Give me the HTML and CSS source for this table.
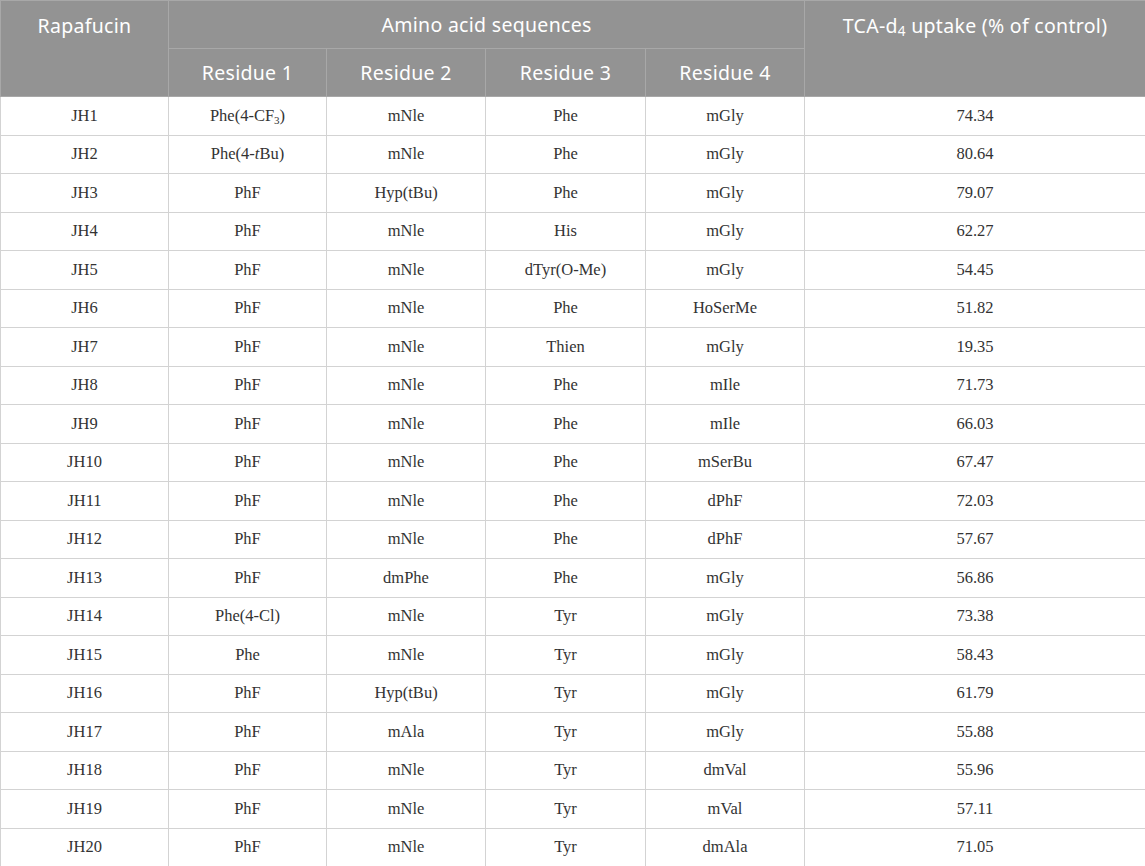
FILE: index.html
```html
<!DOCTYPE html>
<html>
<head>
<meta charset="utf-8">
<link rel="stylesheet" href="styles.css">
</head>
<body>
<table class="data">
  <colgroup>
    <col class="c0"><col class="c1"><col class="c2"><col class="c3"><col class="c4"><col class="c5">
  </colgroup>
  <thead>
    <tr class="h1">
      <th rowspan="2" class="top">Rapafucin</th>
      <th colspan="4">Amino acid sequences</th>
      <th rowspan="2" class="top">TCA-d<sub>4</sub> uptake (% of control)</th>
    </tr>
    <tr class="h2">
      <th>Residue 1</th><th>Residue 2</th><th>Residue 3</th><th>Residue 4</th>
    </tr>
  </thead>
  <tbody>
    <tr><td>JH1</td><td>Phe(4-CF<sub>3</sub>)</td><td>mNle</td><td>Phe</td><td>mGly</td><td>74.34</td></tr>
    <tr><td>JH2</td><td>Phe(4-<i>t</i>Bu)</td><td>mNle</td><td>Phe</td><td>mGly</td><td>80.64</td></tr>
    <tr><td>JH3</td><td>PhF</td><td>Hyp(tBu)</td><td>Phe</td><td>mGly</td><td>79.07</td></tr>
    <tr><td>JH4</td><td>PhF</td><td>mNle</td><td>His</td><td>mGly</td><td>62.27</td></tr>
    <tr><td>JH5</td><td>PhF</td><td>mNle</td><td>dTyr(O-Me)</td><td>mGly</td><td>54.45</td></tr>
    <tr><td>JH6</td><td>PhF</td><td>mNle</td><td>Phe</td><td>HoSerMe</td><td>51.82</td></tr>
    <tr><td>JH7</td><td>PhF</td><td>mNle</td><td>Thien</td><td>mGly</td><td>19.35</td></tr>
    <tr><td>JH8</td><td>PhF</td><td>mNle</td><td>Phe</td><td>mIle</td><td>71.73</td></tr>
    <tr><td>JH9</td><td>PhF</td><td>mNle</td><td>Phe</td><td>mIle</td><td>66.03</td></tr>
    <tr><td>JH10</td><td>PhF</td><td>mNle</td><td>Phe</td><td>mSerBu</td><td>67.47</td></tr>
    <tr><td>JH11</td><td>PhF</td><td>mNle</td><td>Phe</td><td>dPhF</td><td>72.03</td></tr>
    <tr><td>JH12</td><td>PhF</td><td>mNle</td><td>Phe</td><td>dPhF</td><td>57.67</td></tr>
    <tr><td>JH13</td><td>PhF</td><td>dmPhe</td><td>Phe</td><td>mGly</td><td>56.86</td></tr>
    <tr><td>JH14</td><td>Phe(4-Cl)</td><td>mNle</td><td>Tyr</td><td>mGly</td><td>73.38</td></tr>
    <tr><td>JH15</td><td>Phe</td><td>mNle</td><td>Tyr</td><td>mGly</td><td>58.43</td></tr>
    <tr><td>JH16</td><td>PhF</td><td>Hyp(tBu)</td><td>Tyr</td><td>mGly</td><td>61.79</td></tr>
    <tr><td>JH17</td><td>PhF</td><td>mAla</td><td>Tyr</td><td>mGly</td><td>55.88</td></tr>
    <tr><td>JH18</td><td>PhF</td><td>mNle</td><td>Tyr</td><td>dmVal</td><td>55.96</td></tr>
    <tr><td>JH19</td><td>PhF</td><td>mNle</td><td>Tyr</td><td>mVal</td><td>57.11</td></tr>
    <tr><td>JH20</td><td>PhF</td><td>mNle</td><td>Tyr</td><td>dmAla</td><td>71.05</td></tr>
  </tbody>
</table>
</body>
</html>
```
FILE: styles.css
```css
html, body {
  margin: 0;
  padding: 0;
  background: #ffffff;
}
.data {
  width: 1145px;
  border-collapse: collapse;
  table-layout: fixed;
}
.c0 { width: 168px; }
.c1 { width: 158px; }
.c2 { width: 159px; }
.c3 { width: 160px; }
.c4 { width: 159px; }
.c5 { width: 341px; }
.data th {
  background: #939393;
  color: #ffffff;
  font-family: "Noto Sans", "Open Sans", sans-serif;
  font-weight: 400;
  font-size: 19.5px;
  letter-spacing: 0.3px;
  border: 1px solid #a8a8a8;
  height: 47px;
  padding: 0 2px;
  text-align: center;
  vertical-align: middle;
  white-space: nowrap;
}
.data th.top {
  vertical-align: top;
  padding-top: 11px;
}
.data th sub {
  font-size: 13.5px;
  vertical-align: -3px;
  line-height: 0;
}
.data td {
  font-family: "Liberation Serif", "Times New Roman", serif;
  font-size: 16.5px;
  color: #333333;
  text-align: center;
  vertical-align: middle;
  border: 1px solid #d3d3d3;
  height: 37.5px;
  padding: 0 4px;
}
.data td sub {
  font-size: 11px;
  vertical-align: -3px;
  line-height: 0;
}
.data tbody tr:last-child td {
  border-bottom: 2px solid #cfcfcf;
}
```
